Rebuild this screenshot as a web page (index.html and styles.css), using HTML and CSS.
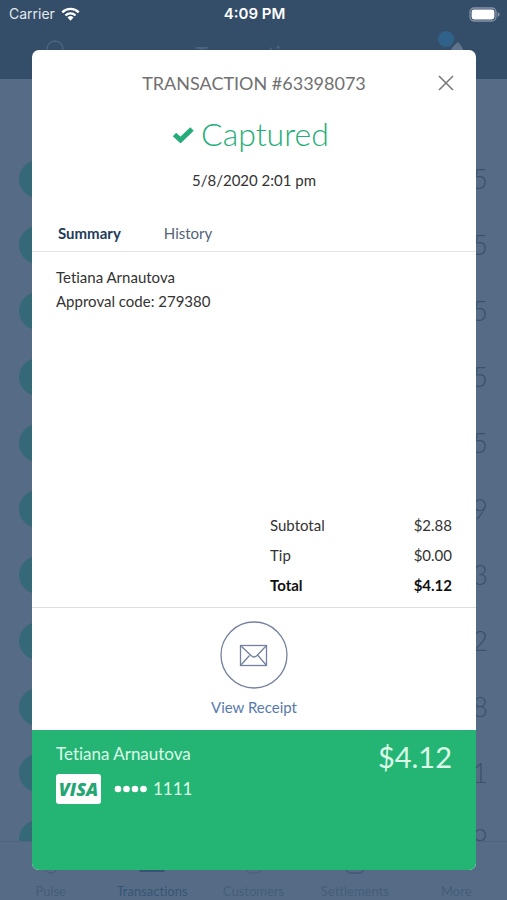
FILE: index.html
```html
<!DOCTYPE html>
<html lang="en">
<head>
<meta charset="utf-8">
<meta name="viewport" content="width=device-width, initial-scale=1">
<title>Transaction #63398073</title>
<link rel="stylesheet" href="styles.css">
</head>
<body>
<div class="screen">
  <header class="app-header">
    <div class="status">
      <div class="carrier">Carrier
        <svg class="wifi" viewBox="0 0 20 15" aria-hidden="true"><g fill="none" stroke="#fff" stroke-width="2.5"><path d="M1.2 5.7a12.4 12.4 0 0 1 17.6 0"/><path d="M4.6 9.1a7.7 7.7 0 0 1 10.8 0"/></g><path d="M6.8 11.2a4.6 4.6 0 0 1 6.4 0L10 14.6z" fill="#fff"/></svg>
      </div>
      <div class="clock">4:09 PM</div>
      <svg class="battery" viewBox="0 0 31 15" aria-hidden="true"><rect x="1" y="1" width="26" height="13" rx="4" fill="none" stroke="#8493a9" stroke-width="1.3"/><rect x="2.6" y="2.6" width="22.8" height="9.8" rx="2.4" fill="#fff"/><path d="M28.6 5v5q2-.8 2-2.5t-2-2.5z" fill="#8493a9"/></svg>
    </div>
    <div class="nav">
      <svg class="search" viewBox="0 0 20 20" aria-hidden="true"><circle cx="10" cy="9" r="8" fill="none" stroke="#4d6581" stroke-width="1.3"/></svg>
      <h1>Transactions</h1>
      <svg class="bell" viewBox="0 0 28 24" aria-hidden="true"><path d="M12 24q2-8 9-13q5 5 7 13z" fill="#60758d"/><circle cx="9" cy="8" r="8" fill="#306188"/></svg>
    </div>
  </header>
  <div class="list">
    <div class="row"><i></i><span>5</span></div>
    <div class="row"><i></i><span>5</span></div>
    <div class="row"><i></i><span>5</span></div>
    <div class="row"><i></i><span>5</span></div>
    <div class="row"><i></i><span>5</span></div>
    <div class="row"><i></i><span>9</span></div>
    <div class="row"><i></i><span>3</span></div>
    <div class="row"><i></i><span>2</span></div>
    <div class="row"><i></i><span>8</span></div>
    <div class="row"><i></i><span>1</span></div>
    <div class="row"><i></i><span>9</span></div>
  </div>
  <nav class="tabbar">
    <a href="#pulse"><svg viewBox="0 0 26 26" aria-hidden="true"><circle cx="13" cy="16" r="7" fill="none" stroke="#455d79"/></svg>Pulse</a>
    <a href="#transactions" class="current"><svg viewBox="0 0 26 26" aria-hidden="true"><rect y="6" width="26" height="16" rx="2" fill="#365574"/></svg>Transactions</a>
    <a href="#customers"><svg viewBox="0 0 26 26" aria-hidden="true"><rect x="5" y="7" width="17" height="16" rx="6" fill="none" stroke="#455d79"/></svg>Customers</a>
    <a href="#settlements"><svg viewBox="0 0 26 26" aria-hidden="true"><rect x="4" y="7" width="18" height="16" rx="5" fill="none" stroke="#455d79" stroke-width="2"/></svg>Settlements</a>
    <a href="#more"><svg viewBox="0 0 26 26" aria-hidden="true"><path d="M4 12h18" stroke="#455d79"/></svg>More</a>
  </nav>

  <section class="dialog" role="dialog" aria-labelledby="dialog-title">
    <div class="dialog-head">
      <h2 id="dialog-title">TRANSACTION #63398073</h2>
      <button class="close" type="button" aria-label="Close"><svg viewBox="0 0 16 16" aria-hidden="true"><path d="M1 1l14 14M15 1L1 15" stroke="#777" stroke-width="1.5"/></svg></button>
    </div>
    <p class="state"><svg viewBox="0 0 22 17" aria-hidden="true"><path d="M2.500 8.500l6 5.500L20 3" fill="none" stroke="#24ad78" stroke-width="5"/></svg>Captured</p>
    <p class="date">5/8/2020 2:01 pm</p>
    <div class="tabs">
      <button type="button" class="active">Summary</button>
      <button type="button">History</button>
    </div>
    <div class="summary">
      <p>Tetiana Arnautova</p>
      <p>Approval code: 279380</p>
    </div>
    <table class="totals">
      <tr><th scope="row">Subtotal</th><td>$2.88</td></tr>
      <tr><th scope="row">Tip</th><td>$0.00</td></tr>
      <tr class="total"><th scope="row">Total</th><td>$4.12</td></tr>
    </table>
    <div class="receipt">
      <button type="button">
        <svg viewBox="0 0 68 68" aria-hidden="true"><g fill="none" stroke="#74829f" stroke-width="1.3"><circle cx="34" cy="34" r="33"/><rect x="20.5" y="24.500" width="26" height="20"/><path d="M20.500 24.500l10.500 10q3 3 6 0l9.500-10M20.500 44.500l9-10M46.500 44.500l-8.500-10"/></g></svg>
        View Receipt
      </button>
    </div>
    <footer class="card">
      <div class="payer">
        <div class="name">Tetiana Arnautova</div>
        <div class="number">
          <span class="brand">VISA</span>
          <svg class="dots" viewBox="0 0 33 8" aria-hidden="true"><g fill="#fff"><circle cx="4" cy="4" r="3.300"/><circle cx="12.500" cy="4" r="3.300"/><circle cx="21" cy="4" r="3.300"/><circle cx="29.500" cy="4" r="3.300"/></g></svg>
          <span>1111</span>
        </div>
      </div>
      <div class="amount">$4.12</div>
    </footer>
  </section>
</div>
</body>
</html>
```
FILE: styles.css
```css
* { box-sizing: border-box; }
body { margin: 0; font-family: Lato, "Open Sans", sans-serif; font-size: 15px; font-variant-ligatures: none; color: #333; }
h1, h2, p { margin: 0; font-weight: 400; }
button { padding: 0; border: 0; background: none; font: inherit; color: inherit; }
svg { display: block; flex: none; }

.screen { position: relative; display: flex; flex-direction: column; height: 100vh; overflow: hidden; background: #566c86; }

.app-header { flex: none; height: 79px; background: #344d68; }
.status { display: grid; grid-template-columns: 1fr auto 1fr; align-items: center; height: 28px; padding: 0 7px 0 9px; color: #fff; font: 15px/20px Inter, sans-serif; }
.carrier { display: flex; align-items: center; gap: 6px; font-size: 14px; color: #e3e8ee; }
.wifi { width: 19px; height: 14px; }
.clock { font-weight: 600; }
.battery { width: 31px; height: 15px; justify-self: end; }
.nav { display: grid; grid-template-columns: 1fr auto 1fr; padding: 3px 42px 0 45px; }
.nav h1 { padding-top: 8px; font-size: 22px; line-height: 30px; color: #4b6480; }
.search { width: 20px; height: 20px; margin-top: 9px; }
.bell { width: 28px; height: 24px; justify-self: end; }

.list { flex: 1; min-height: 0; overflow: hidden; padding-top: 67px; }
.row { display: flex; align-items: center; justify-content: space-between; height: 66px; padding: 0 19px; }
.row i { width: 38px; height: 38px; border-radius: 50%; background: #366978; }
.row span { font-size: 27px; line-height: 34px; font-weight: 300; color: #3b5069; }

.tabbar { flex: none; display: grid; grid-template-columns: repeat(5, 1fr); height: 59px; border-top: 1px solid #4f657f; }
.tabbar a { display: flex; flex-direction: column; align-items: center; padding-top: 8px; color: #455d79; font-size: 13px; line-height: 16px; text-decoration: none; }
.tabbar svg { width: 26px; height: 26px; margin-bottom: 7px; }
.tabbar .current { color: #365574; }

.dialog { position: absolute; inset: 50px 31px 30px 32px; display: flex; flex-direction: column; overflow: hidden; border-radius: 7px; background: #fff; }
.dialog-head { display: grid; grid-template-columns: 24px 1fr 24px; align-items: center; height: 65px; padding: 0 18px; text-align: center; }
h2 { grid-column: 2; font-size: 18px; line-height: 24px; color: #707070; }
.close { display: grid; place-items: center; width: 24px; height: 24px; }
.close svg { width: 16px; height: 16px; }
.state { display: flex; align-items: center; justify-content: center; gap: 7px; height: 38px; padding-right: 7px; font-size: 32px; font-weight: 300; line-height: 38px; color: #24ad78; }
.state svg { width: 22px; height: 17px; }
.date { padding-top: 17px; line-height: 20px; text-align: center; }
.tabs { display: flex; gap: 43px; height: 62px; padding: 23px 26px 0; border-bottom: 1px solid #e3e5e7; color: #52637a; }
.tabs button { height: 40px; line-height: 40px; }
.tabs .active { font-weight: 700; color: #1f3b5b; }
.summary { flex: 1; padding: 13px 24px; line-height: 24px; }
.totals { width: 182px; margin: 0 24px 7px auto; border-collapse: collapse; line-height: 30px; }
.totals th, .totals td { padding: 0; }
.totals th { font-weight: 400; text-align: left; }
.totals td { text-align: right; }
.totals .total th, .totals .total td { font-weight: 700; color: #111; }
.receipt { display: flex; justify-content: center; height: 123px; padding-top: 13px; border-top: 1px solid #dcdfe2; }
.receipt button { display: flex; flex-direction: column; align-items: center; gap: 8px; height: 98px; line-height: 20px; color: #587bad; }
.receipt svg { width: 68px; height: 68px; }
.card { display: flex; justify-content: space-between; height: 140px; padding: 12px 24px 0; background: #24b574; color: #dcfbe9; }
.name { font-size: 17px; line-height: 24px; }
.number { display: flex; align-items: center; padding-top: 8px; font-size: 17px; line-height: 30px; }
.brand { width: 45px; height: 30px; margin-right: 13px; border-radius: 3px; background: #fff; color: #24a574; font: italic 800 18px/30px "Open Sans", sans-serif; text-align: center; }
.dots { width: 33px; height: 8px; margin-right: 6px; }
.amount { font-size: 29px; line-height: 30px; }
```
